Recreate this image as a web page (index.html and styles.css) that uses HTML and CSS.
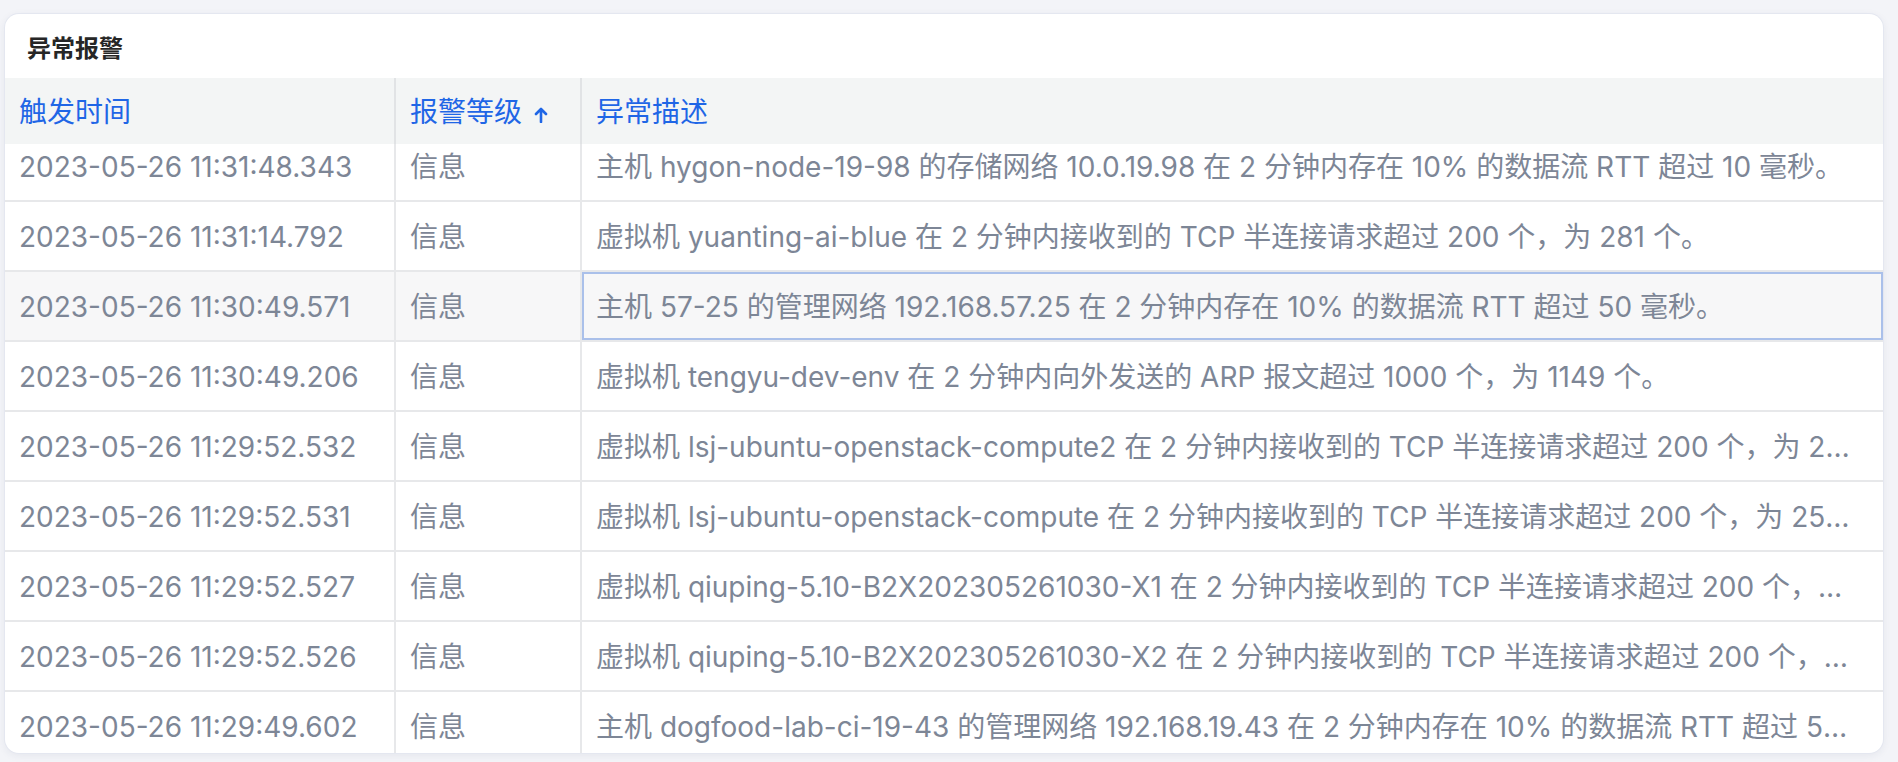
FILE: index.html
```html
<!DOCTYPE html>
<html lang="zh-CN">

<head>
  <meta charset="UTF-8" />
  <meta name="viewport" content="width=device-width, initial-scale=1.0" />
  <title>异常报警</title>
  <link rel="stylesheet" href="styles.css">
</head>

<body>
  <div class="card">
    <div class="card-title">异常报警</div>

    <div class="grid head">
      <div class="cell">触发时间</div>
      <div class="cell">报警等级
        <svg class="sort" width="14" height="16" viewBox="0 0 14 16">
          <path d="M7 15V2M2 7l5-5 5 5" fill="none" stroke="currentColor" stroke-width="2.6" stroke-linecap="round" stroke-linejoin="round" />
        </svg>
      </div>
      <div class="cell">异常描述</div>
    </div>

    <div class="body-wrap">
      <div class="grid rows">
        <div class="cell">2023-05-26 11:31:48.343</div>
        <div class="cell">信息</div>
        <div class="cell">主机 hygon-node-19-98 的存储网络 10.0.19.98 在 2 分钟内存在 10% 的数据流 RTT 超过 10 毫秒。</div>

        <div class="cell">2023-05-26 11:31:14.792</div>
        <div class="cell">信息</div>
        <div class="cell">虚拟机 yuanting-ai-blue 在 2 分钟内接收到的 TCP 半连接请求超过 200 个，为 281 个。</div>

        <div class="cell sel">2023-05-26 11:30:49.571</div>
        <div class="cell sel">信息</div>
        <div class="cell sel focus">主机 57-25 的管理网络 192.168.57.25 在 2 分钟内存在 10% 的数据流 RTT 超过 50 毫秒。</div>

        <div class="cell">2023-05-26 11:30:49.206</div>
        <div class="cell">信息</div>
        <div class="cell">虚拟机 tengyu-dev-env 在 2 分钟内向外发送的 ARP 报文超过 1000 个，为 1149 个。</div>

        <div class="cell">2023-05-26 11:29:52.532</div>
        <div class="cell">信息</div>
        <div class="cell">虚拟机 lsj-ubuntu-openstack-compute2 在 2 分钟内接收到的 TCP 半连接请求超过 200 个，为 264 个。</div>

        <div class="cell">2023-05-26 11:29:52.531</div>
        <div class="cell">信息</div>
        <div class="cell">虚拟机 lsj-ubuntu-openstack-compute 在 2 分钟内接收到的 TCP 半连接请求超过 200 个，为 258 个。</div>

        <div class="cell">2023-05-26 11:29:52.527</div>
        <div class="cell">信息</div>
        <div class="cell">虚拟机 qiuping-5.10-B2X202305261030-X1 在 2 分钟内接收到的 TCP 半连接请求超过 200 个，为 233 个。</div>

        <div class="cell">2023-05-26 11:29:52.526</div>
        <div class="cell">信息</div>
        <div class="cell">虚拟机 qiuping-5.10-B2X202305261030-X2 在 2 分钟内接收到的 TCP 半连接请求超过 200 个，为 229 个。</div>

        <div class="cell">2023-05-26 11:29:49.602</div>
        <div class="cell">信息</div>
        <div class="cell">主机 dogfood-lab-ci-19-43 的管理网络 192.168.19.43 在 2 分钟内存在 10% 的数据流 RTT 超过 50 毫秒。</div>
      </div>
    </div>
  </div>
</body>

</html>
```

FILE: styles.css
```css
body {
  margin: 0;
  padding: 14px 15px 0 5px;
  background: #f3f4f8;
  font-family: Inter, "Noto Sans CJK SC", sans-serif;
  height: 762px;
  box-sizing: border-box;
  overflow: hidden;
}

.card {
  background: #fff;
  border-radius: 14px;
  height: 739px;
  overflow: hidden;
  box-shadow: 0 0 0 1px #e4e7f0, 0 2px 8px rgba(40, 50, 90, 0.08);
  display: flex;
  flex-direction: column;
}

.card-title {
  height: 64px;
  flex: none;
  display: flex;
  align-items: center;
  padding-left: 22px;
  font-size: 24px;
  font-weight: 700;
  color: #262626;
}

.grid {
  display: grid;
  grid-template-columns: 391px 186px 1fr;
}

.cell {
  white-space: nowrap;
  overflow: hidden;
  text-overflow: ellipsis;
  padding: 0 20px 0 14px;
  font-size: 28px;
}

.head {
  flex: none;
  background: #f3f5f5;
  position: relative;
  z-index: 1;
}

.head .cell {
  height: 66px;
  line-height: 68px;
  color: #1f66e6;
  border-right: 2px solid #e1e3e5;
}

.head .cell:last-child {
  border-right: none;
}

.sort {
  vertical-align: -1px;
  margin-left: 4px;
}

.body-wrap {
  flex: 1;
  overflow: hidden;
}

.rows {
  margin-top: -12px;
}

.rows .cell {
  height: 68px;
  line-height: 70px;
  color: #7d8696;
  border-bottom: 2px solid #e7e8ea;
}

.rows .cell:nth-child(3n+1),
.rows .cell:nth-child(3n+2) {
  border-right: 2px solid #e7e8ea;
}

.rows .sel {
  background: #f7f7f8;
}

.rows .focus {
  box-shadow: inset 0 0 0 2px #aac0ea;
}
```
